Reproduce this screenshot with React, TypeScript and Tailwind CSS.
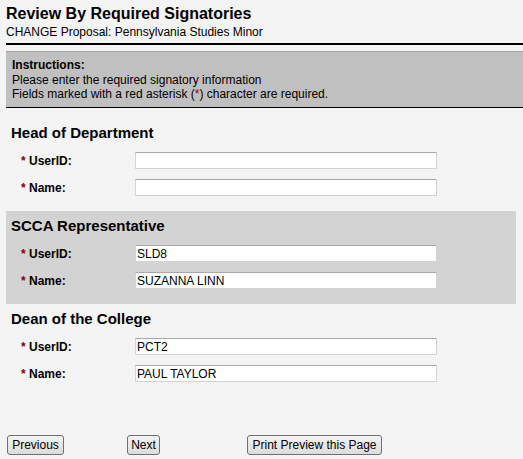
const font = { fontFamily: '"Liberation Sans", Arial, sans-serif' };

type Field = { label: string; value: string };

function FieldRow({ label, value }: Field) {
  return (
    <div className="flex items-center h-[17px]">
      <div className="w-[129px] pl-[15px] text-[12px] font-bold text-black whitespace-nowrap">
        <span className="text-[#8b0000]">*</span> {label}:
      </div>
      <input
        type="text"
        defaultValue={value}
        className="w-[302px] h-[17px] bg-white border border-[#d4d4d4] border-t-[#a9a9a9] pl-[1px] text-[12px] text-black outline-none"
        style={font}
      />
    </div>
  );
}

function Section({ title, fields, shaded }: { title: string; fields: Field[]; shaded?: boolean }) {
  return (
    <div className={`mx-[6px] w-[510px] pt-[6px] pb-[15px] ${shaded ? "bg-[#d3d3d3]" : ""}`}>
      <h2 className="pl-[5px] text-[15px] leading-[17px] font-bold text-black">{title}</h2>
      <div className="mt-[11px] flex flex-col gap-[10px]">
        {fields.map((f) => (
          <FieldRow key={f.label} {...f} />
        ))}
      </div>
    </div>
  );
}

function Btn({ children, w }: { children: React.ReactNode; w: string }) {
  return (
    <button
      className={`${w} h-[20px] border border-[#707070] rounded-[3px] bg-gradient-to-b from-[#f3f3f3] to-[#dcdcdc] text-[12px] leading-[18px] text-black text-center`}
      style={font}
    >
      {children}
    </button>
  );
}

export default function App() {
  return (
    <div className="min-h-screen w-full bg-[#f4f4f4] text-black" style={font}>
      {/* Header */}
      <div className="px-[6px] pt-[5px]">
        <h1 className="text-[16px] leading-[18px] font-bold">Review By Required Signatories</h1>
        <div className="mt-[2px] text-[12px] leading-[14px]">CHANGE Proposal: Pennsylvania Studies Minor</div>
      </div>
      <div className="ml-[6px] mt-[4px] h-[2px] bg-black" />

      {/* Instructions */}
      <div className="ml-[6px] mt-[6px] bg-[#c0c0c0] border-t border-t-[#a4a4a4] border-b border-b-black pl-[6px] pt-[6px] pb-[5px] text-[12px] leading-[14.7px]">
        <div className="font-bold">Instructions:</div>
        <div>Please enter the required signatory information</div>
        <div>
          Fields marked with a red asterisk (<span className="text-[#8b0000]">*</span>) character are required.
        </div>
      </div>

      <div className="mt-[10px]">
        <Section
          title="Head of Department"
          fields={[
            { label: "UserID", value: "" },
            { label: "Name", value: "" },
          ]}
        />
        <Section
          title="SCCA Representative"
          shaded
          fields={[
            { label: "UserID", value: "SLD8" },
            { label: "Name", value: "SUZANNA LINN" },
          ]}
        />
        <Section
          title="Dean of the College"
          fields={[
            { label: "UserID", value: "PCT2" },
            { label: "Name", value: "PAUL TAYLOR" },
          ]}
        />
      </div>

      {/* Navigation */}
      <div className="mt-[35px] pl-[7px] grid grid-cols-[120px_120px_auto] items-start">
        <div><Btn w="w-[57px]">Previous</Btn></div>
        <div><Btn w="w-[33px]">Next</Btn></div>
        <div><Btn w="w-[135px]">Print Preview this Page</Btn></div>
      </div>
    </div>
  );
}
